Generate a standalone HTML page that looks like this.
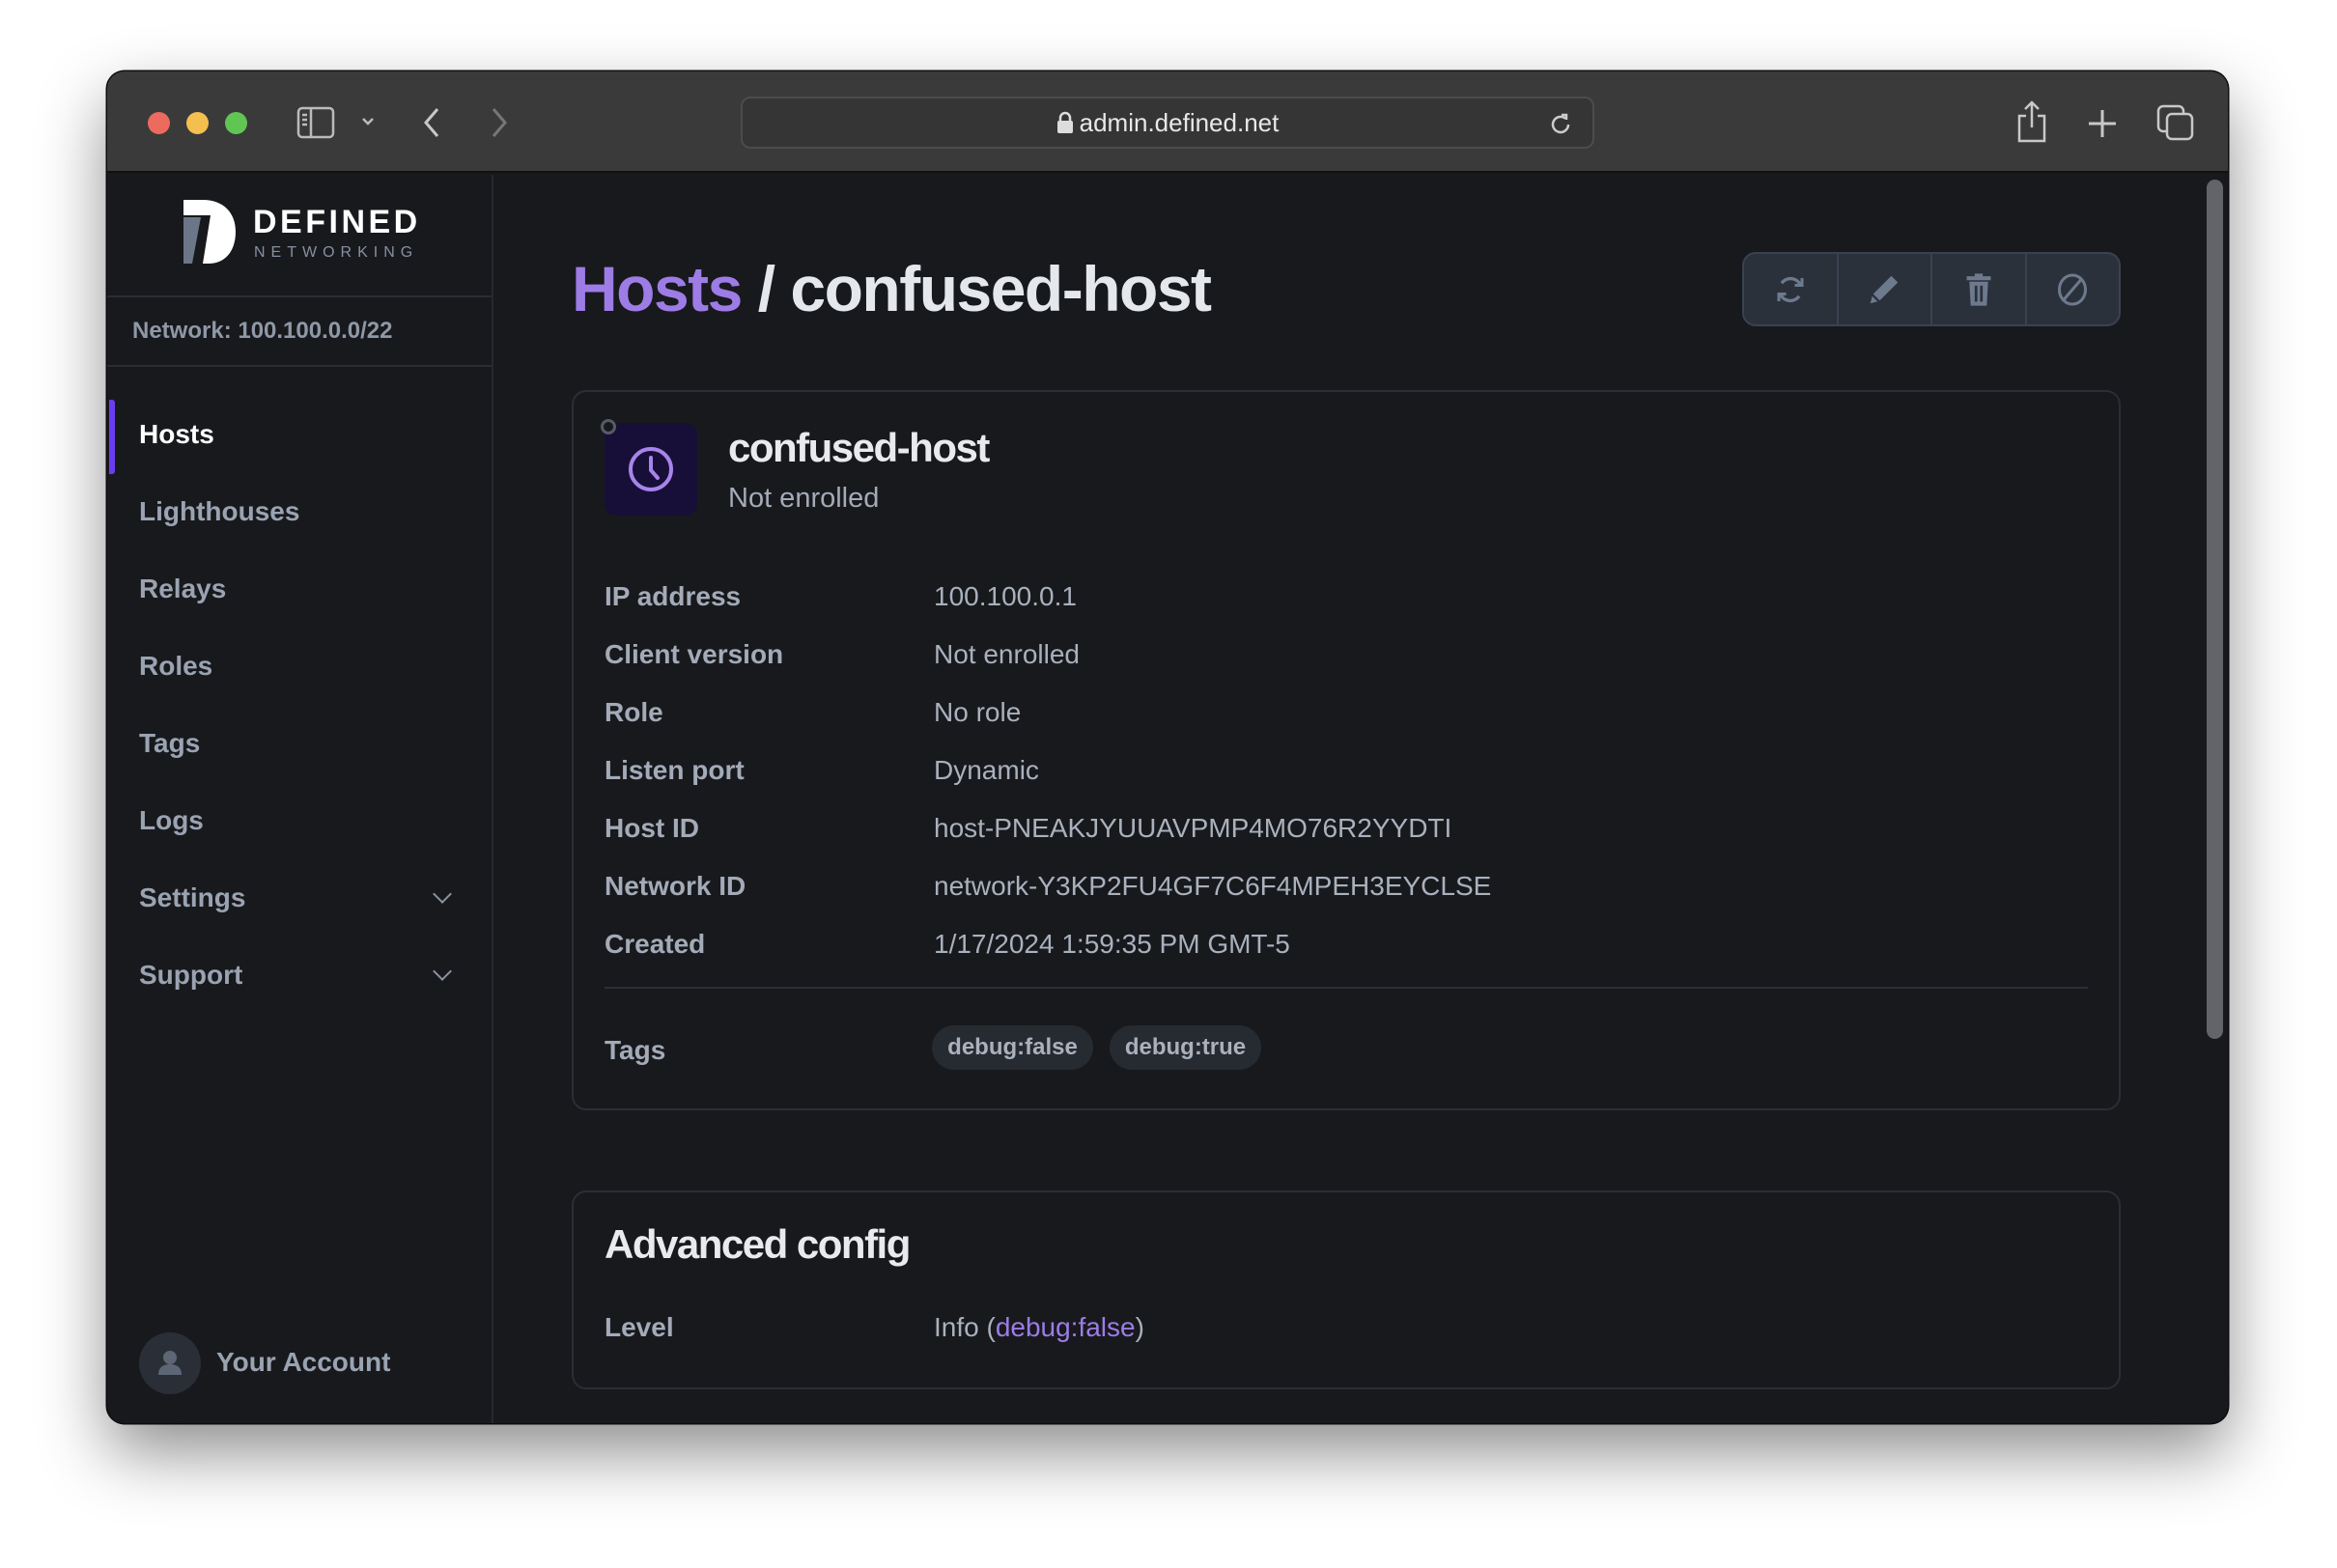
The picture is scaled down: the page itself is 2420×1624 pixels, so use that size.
<!DOCTYPE html>
<html><head><meta charset="utf-8"><style>
*{margin:0;padding:0;box-sizing:border-box}
body{width:2420px;height:1624px;background:#fff;font-family:"Liberation Sans",sans-serif;position:relative;overflow:hidden}
.win{position:absolute;left:111px;top:74px;width:2196px;height:1400px;border-radius:18px;background:#18191d;overflow:hidden;box-shadow:0 30px 70px rgba(0,0,0,.45),0 0 0 1.5px #111}
.tb{position:absolute;left:0;top:0;right:0;height:105px;background:#3a3a3a;border-bottom:2px solid #111}
.dot{position:absolute;top:42px;width:23px;height:23px;border-radius:50%}
.url{position:absolute;left:656px;top:26px;width:884px;height:54px;border:2px solid #4c4c4c;border-radius:10px;background:#353535;color:#e8e8e8;font-size:26px;text-align:center;line-height:50px}
.side{position:absolute;left:0;top:107px;width:400px;bottom:0;border-right:2px solid #25282e}
.hr{position:absolute;left:0;right:0;height:2px;background:#2a2d33}
.nav{position:absolute;left:33px;font-size:28px;font-weight:bold;color:#9aa3b1}
.chev{position:absolute;left:340px;width:14px;height:14px;border-right:2.5px solid #8a93a1;border-bottom:2.5px solid #8a93a1;transform:rotate(45deg)}
.main{position:absolute;left:402px;top:107px;right:0;bottom:0}
.card{position:absolute;left:79px;width:1604px;border:2px solid #2a2e35;border-radius:15px}
.lb{position:absolute;left:32px;font-size:28px;font-weight:bold;color:#a3abb8}
.vl{position:absolute;left:373px;font-size:28px;color:#a9b1bd}
.pill{position:absolute;height:46px;border-radius:23px;background:#262a31;color:#a9b1bd;font-size:24px;font-weight:bold;line-height:46px;text-align:center}
.btns{position:absolute;left:1291px;top:80px;width:392px;height:77px;border:2px solid #3a4250;border-radius:14px;background:#2b313b;display:flex;overflow:hidden}
.btns div{flex:1;border-right:2px solid #3a4250;display:flex;align-items:center;justify-content:center}
.btns div:last-child{border-right:none}
</style></head><body>
<div class="win">
 <div class="tb">
  <div class="dot" style="left:42px;background:#ec6a5e"></div>
  <div class="dot" style="left:82px;background:#f4bf4f"></div>
  <div class="dot" style="left:122px;background:#61c554"></div>
  <svg style="position:absolute;left:196px;top:36px" width="40" height="34" viewBox="0 0 40 34" fill="none" stroke="#bbb" stroke-width="2.5"><rect x="2" y="2" width="36" height="30" rx="4"/><line x1="15" y1="2" x2="15" y2="32"/><line x1="6" y1="9" x2="11" y2="9"/><line x1="6" y1="14" x2="11" y2="14"/><line x1="6" y1="19" x2="11" y2="19"/></svg>
  <svg style="position:absolute;left:262px;top:46px" width="16" height="12" viewBox="0 0 16 12" fill="none" stroke="#bbb" stroke-width="2.5"><path d="M3 3l5 5 5-5"/></svg>
  <svg style="position:absolute;left:326px;top:36px" width="20" height="34" viewBox="0 0 20 34" fill="none" stroke="#c8c8c8" stroke-width="3"><path d="M16 3L4 17l12 14"/></svg>
  <svg style="position:absolute;left:396px;top:36px" width="20" height="34" viewBox="0 0 20 34" fill="none" stroke="#777" stroke-width="3"><path d="M4 3l12 14L4 31"/></svg>
  <div class="url"><svg width="18" height="24" viewBox="0 0 18 24" style="vertical-align:-3px;margin-right:6px"><path d="M4 11V7a5 5 0 0 1 10 0v4" fill="none" stroke="#ddd" stroke-width="2.5"/><rect x="1" y="10" width="16" height="13" rx="2" fill="#ddd"/></svg>admin.defined.net
   <svg style="position:absolute;right:20px;top:14px" width="26" height="26" viewBox="0 0 26 26" fill="none" stroke="#ccc" stroke-width="2.5"><path d="M21 13a8 8 0 1 1-3-6.3"/><path d="M14 3h5v5"/></svg></div>
  <svg style="position:absolute;left:1976px;top:30px" width="34" height="44" viewBox="0 0 34 44" fill="none" stroke="#c8c8c8" stroke-width="2.5"><path d="M11 16H4v26h26V16h-7M17 2v26M10 9l7-7 7 7"/></svg>
  <svg style="position:absolute;left:2050px;top:38px" width="32" height="32" viewBox="0 0 32 32" stroke="#c8c8c8" stroke-width="3"><path d="M16 2v28M2 16h28"/></svg>
  <svg style="position:absolute;left:2122px;top:34px" width="40" height="38" viewBox="0 0 40 38" fill="none" stroke="#c8c8c8" stroke-width="2.5"><rect x="2" y="2" width="26" height="26" rx="5"/><rect x="11" y="10" width="26" height="26" rx="5" fill="#3a3a3a"/></svg>
 </div>
 <div class="side">
  <svg style="position:absolute;left:79px;top:26px" width="60" height="66" viewBox="0 0 60 66"><path d="M0 0h20c22 0 34 14 34 33S44 66 26 66h-6l8-50H0z" fill="#fff"/><path d="M0 18h18l-9 48H0z" fill="#6b7688"/></svg>
  <div style="position:absolute;left:151px;top:30px;font-size:34px;font-weight:bold;color:#fff;letter-spacing:3.5px">DEFINED</div>
  <div style="position:absolute;left:152px;top:72px;font-size:16px;color:#8690a0;letter-spacing:6px">NETWORKING</div>
  <div class="hr" style="top:125px"></div>
  <div style="position:absolute;left:26px;top:148px;font-size:24px;font-weight:bold;color:#8f98a6">Network: 100.100.0.0/22</div>
  <div class="hr" style="top:197px"></div>
  <div style="position:absolute;left:2px;top:233px;width:6px;height:77px;background:#6a3df0;border-radius:0 3px 3px 0"></div>
  <div class="nav" style="top:253px;color:#fff">Hosts</div>
  <div class="nav" style="top:333px">Lighthouses</div>
  <div class="nav" style="top:413px">Relays</div>
  <div class="nav" style="top:493px">Roles</div>
  <div class="nav" style="top:573px">Tags</div>
  <div class="nav" style="top:653px">Logs</div>
  <div class="nav" style="top:733px">Settings</div><div class="chev" style="top:738px"></div>
  <div class="nav" style="top:813px">Support</div><div class="chev" style="top:818px"></div>
  <div style="position:absolute;left:33px;top:1199px;width:64px;height:64px;border-radius:50%;background:#2a2e36"><svg width="64" height="64" viewBox="0 0 64 64" fill="#5d6675"><circle cx="32" cy="26" r="7"/><path d="M20 44c0-8 5-11 12-11s12 3 12 11z"/></svg></div>
  <div class="nav" style="top:1214px;left:113px">Your Account</div>
 </div>
 <div class="main">
  <div style="position:absolute;left:79px;top:80px;font-size:66px;font-weight:bold;letter-spacing:-1.5px;color:#e4e7ec;white-space:nowrap"><span style="color:#9d7ce6">Hosts</span> / confused-host</div>
  <div class="btns">
   <div><svg width="36" height="36" viewBox="0 0 24 24" fill="none" stroke="#6d7a8e" stroke-width="2.2"><path d="M19 9A7.5 7.5 0 0 0 6 7.5M5 15a7.5 7.5 0 0 0 13 1.5"/><path d="M20 4v5h-5M4 20v-5h5" stroke-width="2"/></svg></div>
   <div><svg width="36" height="36" viewBox="0 0 24 24" fill="#6d7a8e"><path d="M17 2.5l4.5 4.5L9 19.5 4.5 15zM3.8 16.5l3.7 3.7L2.5 21.5z"/></svg></div>
   <div><svg width="34" height="36" viewBox="0 0 24 26" fill="#6d7a8e"><path d="M9 1h6v2h6v3H3V3h6z"/><path d="M5 7h14l-1 18H6z"/><rect x="9" y="10" width="2" height="12" fill="#2b313b"/><rect x="13" y="10" width="2" height="12" fill="#2b313b"/></svg></div>
   <div><svg width="36" height="36" viewBox="0 0 24 24" fill="none" stroke="#6d7a8e" stroke-width="2"><ellipse cx="12" cy="12" rx="9" ry="10"/><path d="M18 5L6 19"/></svg></div>
  </div>
  <div class="card" style="top:223px;height:746px">
   <div style="position:absolute;left:32px;top:32px;width:96px;height:96px;border-radius:12px;background:#170f38"><svg style="position:absolute;left:23px;top:23px" width="50" height="50" viewBox="0 0 50 50" fill="none" stroke="#a784ea" stroke-width="4"><circle cx="25" cy="25" r="21"/><path d="M25 13v13l7 8" stroke-linecap="round"/></svg></div>
   <div style="position:absolute;left:28px;top:28px;width:16px;height:16px;border-radius:50%;background:#18191d;border:3px solid #555c68"></div>
   <div style="position:absolute;left:160px;top:34px;font-size:42px;font-weight:bold;letter-spacing:-1.5px;color:#e8eaee">confused-host</div>
   <div style="position:absolute;left:160px;top:94px;font-size:29px;color:#a3abb8">Not enrolled</div>
   <div class="lb" style="top:196px">IP address</div><div class="vl" style="top:196px">100.100.0.1</div>
   <div class="lb" style="top:256px">Client version</div><div class="vl" style="top:256px">Not enrolled</div>
   <div class="lb" style="top:316px">Role</div><div class="vl" style="top:316px">No role</div>
   <div class="lb" style="top:376px">Listen port</div><div class="vl" style="top:376px">Dynamic</div>
   <div class="lb" style="top:436px">Host ID</div><div class="vl" style="top:436px">host-PNEAKJYUUAVPMP4MO76R2YYDTI</div>
   <div class="lb" style="top:496px">Network ID</div><div class="vl" style="top:496px">network-Y3KP2FU4GF7C6F4MPEH3EYCLSE</div>
   <div class="lb" style="top:556px">Created</div><div class="vl" style="top:556px">1/17/2024 1:59:35 PM GMT-5</div>
   <div style="position:absolute;left:32px;right:32px;top:616px;height:2px;background:#2a2e35"></div>
   <div class="lb" style="top:666px">Tags</div>
   <div class="pill" style="left:371px;top:656px;width:167px">debug:false</div>
   <div class="pill" style="left:555px;top:656px;width:157px">debug:true</div>
  </div>
  <div class="card" style="top:1052px;height:206px">
   <div style="position:absolute;left:32px;top:30px;font-size:42px;font-weight:bold;letter-spacing:-1.5px;color:#e8eaee">Advanced config</div>
   <div class="lb" style="top:124px">Level</div><div class="vl" style="top:124px">Info (<span style="color:#9d7ce6">debug:false</span>)</div>
  </div>
 </div>
 <div style="position:absolute;left:2174px;top:112px;width:17px;height:890px;border-radius:9px;background:#62646a"></div>
</div>
</body></html>
